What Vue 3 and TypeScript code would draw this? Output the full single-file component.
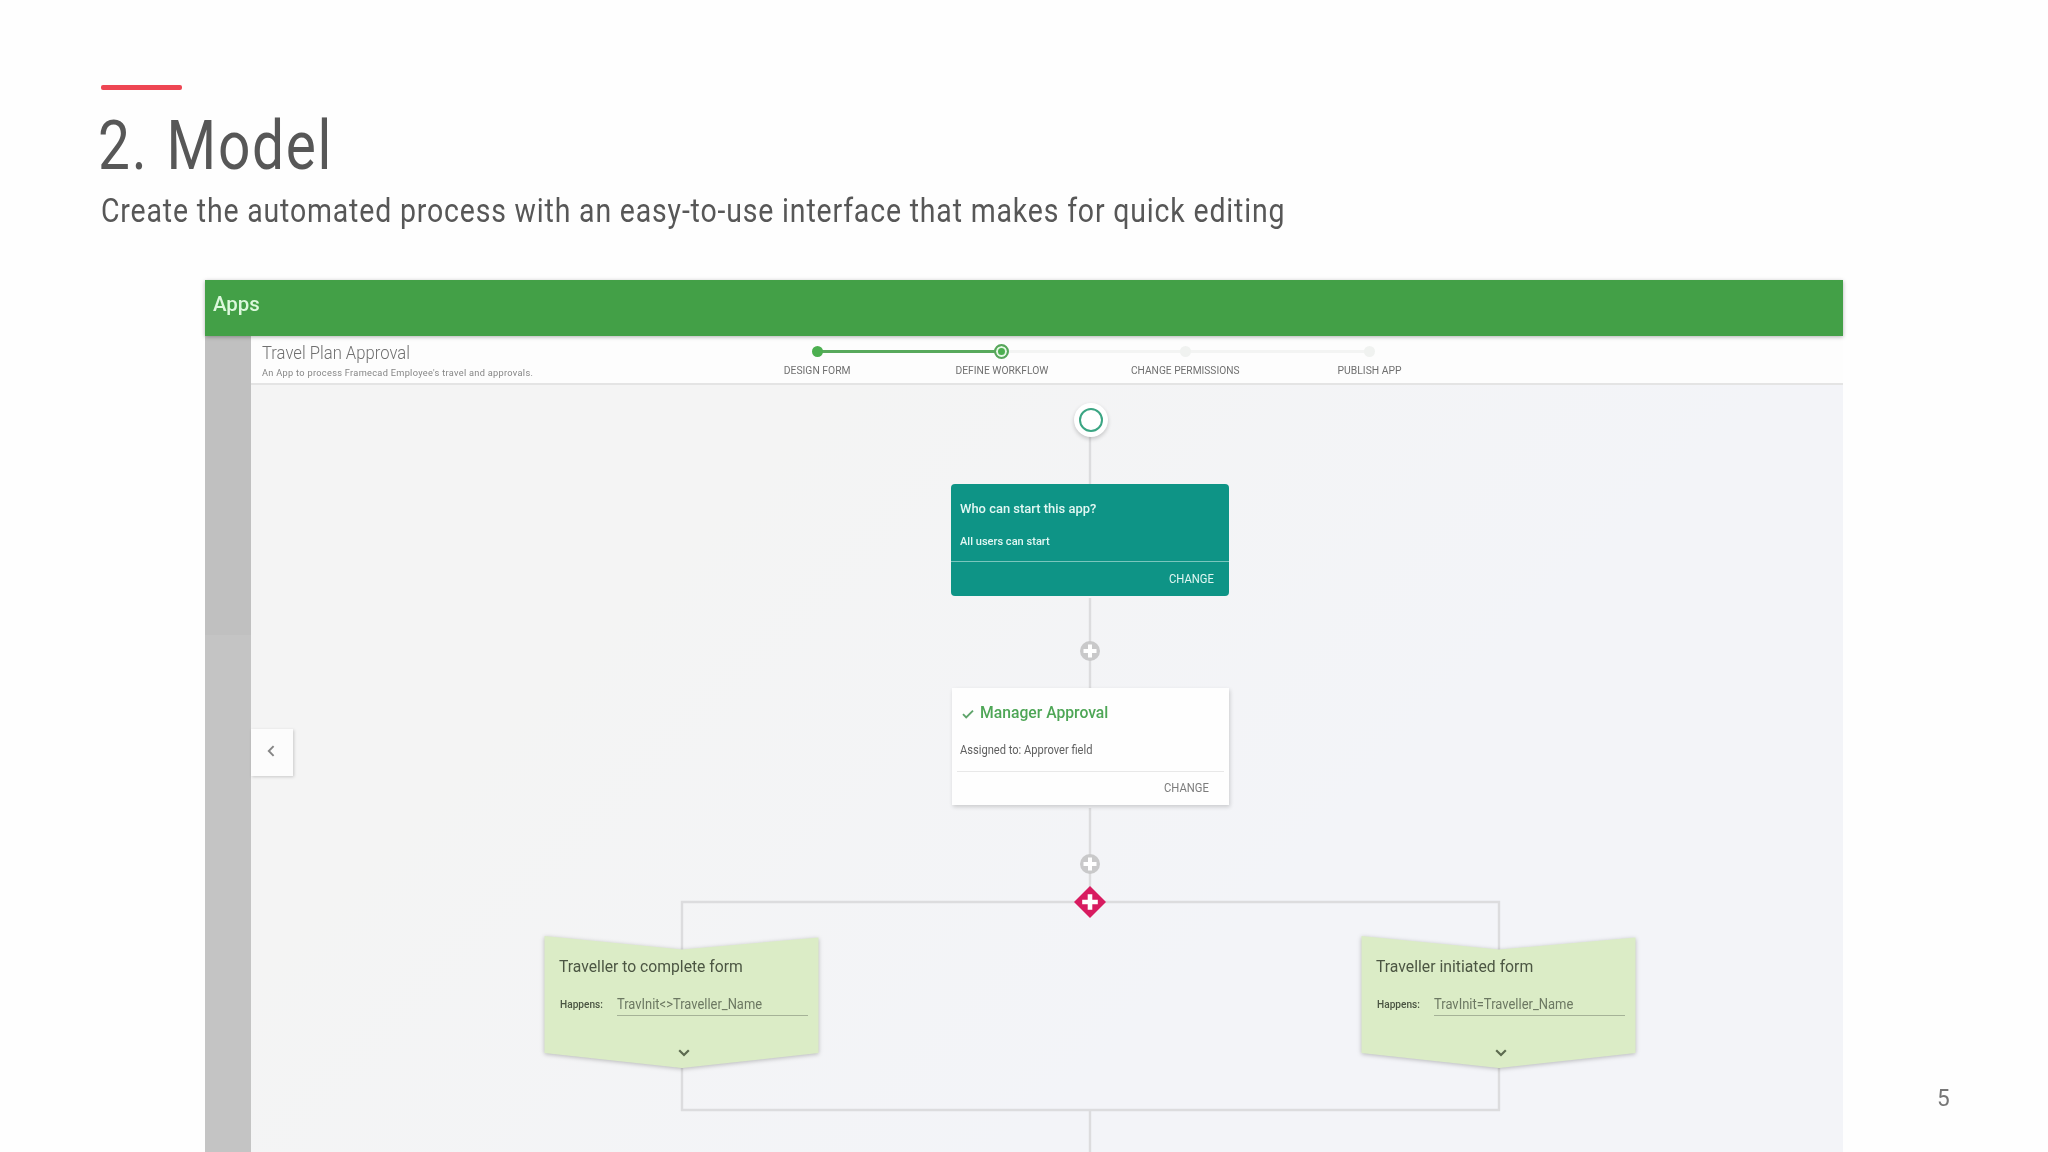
<script setup lang="ts">
import type { Directive } from 'vue'

interface Step {
  label: string
  width: number
  state: 'done' | 'current' | 'todo'
}

interface Branch {
  id: string
  title: string
  titleWidth: number
  condition: string
  conditionWidth: number
}

// Condenses or widens a line of text to a given width in pixels.
const vFit: Directive<HTMLElement, number> = {
  mounted(el, binding) {
    el.style.transform = `scaleX(${binding.value / el.offsetWidth})`
  },
}

const steps: Step[] = [
  { label: 'DESIGN FORM', width: 66.5, state: 'done' },
  { label: 'DEFINE WORKFLOW', width: 93, state: 'current' },
  { label: 'CHANGE PERMISSIONS', width: 109, state: 'todo' },
  { label: 'PUBLISH APP', width: 64, state: 'todo' },
]

const branches: Branch[] = [
  { id: 'left', title: 'Traveller to complete form', titleWidth: 183.5, condition: 'TravInit<>Traveller_Name', conditionWidth: 145 },
  { id: 'right', title: 'Traveller initiated form', titleWidth: 157.5, condition: 'TravInit=Traveller_Name', conditionWidth: 139 },
]
</script>

<template>
  <main class="slide">
    <header class="heading">
      <div class="accent"></div>
      <h1><span v-fit="235" class="fit">2. Model</span></h1>
      <p><span v-fit="1184" class="fit">Create the automated process with an easy-to-use interface that makes for quick editing</span></p>
    </header>

    <section class="app">
      <div class="topbar"><span v-fit="47" class="fit">Apps</span></div>
      <div class="body">
        <aside class="sidebar"><div class="sidebar-top"></div></aside>
        <div class="content">
          <div class="strip">
            <div class="info">
              <div class="app-name"><span v-fit="148" class="fit">Travel Plan Approval</span></div>
              <div class="app-desc"><span v-fit="271" class="fit">An App to process Framecad Employee's travel and approvals.</span></div>
            </div>
            <ol class="steps">
              <li v-for="s in steps" :key="s.label" :class="s.state">
                <div class="track"><i class="dot"></i></div>
                <span v-fit="s.width" class="fit mid">{{ s.label }}</span>
              </li>
            </ol>
          </div>

          <div class="canvas">
            <svg class="wires" width="1592" height="767" viewBox="251 385 1592 767" fill="none" stroke="#dcdcde" stroke-width="2.4">
              <path d="M1090 436V484M1090 598V688M1090 808V902M1090 1110V1152" />
              <path d="M682 950V902H1499V950M682 1068V1110H1499V1068" />
            </svg>

            <div class="start"></div>

            <article class="card teal">
              <div class="card-main">
                <div class="q"><span v-fit="136.5" class="fit">Who can start this app?</span></div>
                <div class="a"><span v-fit="89.5" class="fit">All users can start</span></div>
              </div>
              <footer><span v-fit="45" class="fit end">CHANGE</span></footer>
            </article>

            <svg class="plus first" width="20" height="20" viewBox="0 0 20 20">
              <circle cx="10" cy="10" r="10" fill="#c9c9ca" />
              <path d="M10 3.5v13M3.5 10h13" stroke="#fff" stroke-width="4" />
            </svg>

            <article class="card white">
              <div class="card-main">
                <div class="name">
                  <svg width="12" height="10" viewBox="0 0 12 10"><path d="M1 5.2L4.2 8.4L11 1.6" fill="none" stroke="#5fa46b" stroke-width="1.9" /></svg>
                  <span v-fit="128.5" class="fit">Manager Approval</span>
                </div>
                <div class="who"><span v-fit="132.5" class="fit">Assigned to: Approver field</span></div>
              </div>
              <footer><span v-fit="45" class="fit end">CHANGE</span></footer>
            </article>

            <svg class="plus second" width="20" height="20" viewBox="0 0 20 20">
              <circle cx="10" cy="10" r="10" fill="#c9c9ca" />
              <path d="M10 3.5v13M3.5 10h13" stroke="#fff" stroke-width="4" />
            </svg>

            <svg class="gateway" width="34" height="34" viewBox="0 0 34 34">
              <path d="M17 1L33 17L17 33L1 17Z" fill="#d81b60" />
              <path d="M17 9.2v15.6M9.2 17h15.6" stroke="#fff" stroke-width="4.6" />
            </svg>

            <article v-for="b in branches" :key="b.id" class="branch" :class="b.id">
              <svg class="shape" width="275" height="135" viewBox="0 0 275 135">
                <path d="M0.5 1L138 14.5L274.5 2.5V118L138 133L0.5 118Z" fill="#dbecc6" />
              </svg>
              <div class="branch-body">
                <div class="branch-title"><span v-fit="b.titleWidth" class="fit">{{ b.title }}</span></div>
                <div class="rule">
                  <div class="rule-label"><span v-fit="42.5" class="fit">Happens:</span></div>
                  <div class="rule-value"><span v-fit="b.conditionWidth" class="fit">{{ b.condition }}</span></div>
                </div>
                <svg class="expand" width="12" height="8" viewBox="0 0 12 8"><path d="M1.2 1.2L6 6L10.8 1.2" fill="none" stroke="#5d6b50" stroke-width="2.2" /></svg>
              </div>
            </article>

            <button class="collapse" type="button">
              <svg width="8" height="12" viewBox="0 0 8 12"><path d="M6.6 1.2L1.8 6L6.6 10.8" fill="none" stroke="#858585" stroke-width="1.9" /></svg>
            </button>
          </div>
        </div>
      </div>
    </section>

    <div class="page-number"><span v-fit="12.5" class="fit">5</span></div>
  </main>
</template>

<style>
body {
  margin: 0;
  background: #fff;
}
</style>

<style scoped>
.slide {
  position: relative;
  box-sizing: border-box;
  width: 2048px;
  height: 1152px;
  overflow: hidden;
  background: #fefefe;
  font-family: Roboto, "Liberation Sans", sans-serif;
  color: #555;
}
.fit {
  display: inline-block;
  white-space: nowrap;
  transform-origin: 0 50%;
}
.fit.mid {
  transform-origin: 50% 50%;
}
.fit.end {
  transform-origin: 100% 50%;
}

.heading {
  box-sizing: border-box;
  height: 280px;
  padding: 85px 0 0 100.5px;
}
.accent {
  width: 81px;
  height: 5px;
  border-radius: 2px;
  background: #ee4653;
}
h1 {
  margin: 16px 0 0 -3px;
  font-size: 68px;
  line-height: 80px;
  font-weight: 400;
  letter-spacing: 2px;
  word-spacing: 3px;
  color: #575757;
}
.heading p {
  margin: 4px 0 0;
  font-size: 34px;
  line-height: 40px;
  letter-spacing: 1px;
  color: #575757;
}

.app {
  display: flex;
  flex-direction: column;
  width: 1638px;
  height: 872px;
  margin-left: 205px;
}
.topbar {
  position: relative;
  z-index: 2;
  box-sizing: border-box;
  flex: none;
  height: 55.5px;
  padding: 12px 0 0 8px;
  background: #43a047;
  box-shadow: 0 1px 4px rgba(0, 0, 0, 0.3);
  font-size: 20px;
  line-height: 24px;
  font-weight: 500;
  color: #dcf8dc;
}
.body {
  display: flex;
  flex: 1;
}
.sidebar {
  flex: none;
  width: 46px;
  background: #c4c4c4;
}
.sidebar-top {
  height: 299px;
  background: #c0c0c0;
}
.content {
  display: flex;
  flex-direction: column;
  flex: 1;
}
.strip {
  box-sizing: border-box;
  display: flex;
  height: 49.5px;
  background: #fdfdfd;
  border-bottom: 2px solid #e4e4e4;
}
.info {
  box-sizing: border-box;
  width: 474.5px;
  padding: 7.5px 0 0 11px;
}
.app-name {
  height: 20px;
  font-size: 18px;
  line-height: 20px;
  font-weight: 300;
  color: #707070;
}
.app-desc {
  margin-top: 4px;
  font-size: 9.5px;
  line-height: 12px;
  letter-spacing: 0.3px;
  color: #858585;
}
.steps {
  display: grid;
  grid-template-columns: repeat(4, 184px);
  margin: 0;
  padding: 0;
  list-style: none;
}
.steps li {
  display: flex;
  flex-direction: column;
  align-items: center;
  font-size: 11.5px;
  line-height: 14px;
  color: #707070;
}
.track {
  position: relative;
  display: flex;
  align-items: center;
  justify-content: center;
  width: 184px;
  height: 22px;
  margin: 5px 0 0;
}
li:not(:last-child) .track::before {
  content: "";
  position: absolute;
  left: 92px;
  top: 9.5px;
  width: 184px;
  height: 3px;
  background: #f3f4f3;
}
li.done .track::before {
  background: #58a95c !important;
}
.dot {
  position: relative;
  z-index: 1;
  box-sizing: border-box;
  width: 11px;
  height: 11px;
  border-radius: 50%;
  background: #f0f2f0;
}
.done .dot {
  background: #4caf50;
}
.current .dot {
  width: 15px;
  height: 15px;
  border: 2px solid #57a65b;
  background: #4caf50;
  box-shadow: inset 0 0 0 2px #e6f7e6;
}

.canvas {
  position: relative;
  flex: 1;
  background: linear-gradient(135deg, #f4f4f4 25%, #f3f4f8 65%);
}
.wires {
  position: absolute;
  left: 0;
  top: 0;
}
.start {
  position: absolute;
  left: 822.5px;
  top: 18px;
  box-sizing: border-box;
  width: 34px;
  height: 34px;
  border-radius: 50%;
  background: #fff;
  box-shadow: 0 2px 4px rgba(0, 0, 0, 0.2);
}
.start::after {
  content: "";
  position: absolute;
  inset: 5px;
  border: 2.5px solid #3ba583;
  border-radius: 50%;
}
.card {
  position: absolute;
  display: flex;
  flex-direction: column;
}
.card footer {
  display: flex;
  flex: 1;
  align-items: center;
  justify-content: flex-end;
  font-size: 12px;
}
.teal {
  left: 700px;
  top: 98.5px;
  width: 278px;
  height: 112px;
  border-radius: 4px;
  background: #0e9486;
  color: #e2f7f3;
}
.teal .card-main {
  box-sizing: border-box;
  height: 78.5px;
  padding: 15px 0 0 9px;
  border-bottom: 1px solid #79c6bd;
}
.teal footer {
  padding-right: 15px;
}
.q {
  height: 20px;
  font-size: 13px;
  line-height: 20px;
  font-weight: 500;
}
.a {
  margin-top: 12.5px;
  font-size: 11.5px;
  line-height: 20px;
  font-weight: 500;
}
.white {
  left: 701px;
  top: 303px;
  width: 277px;
  height: 117px;
  background: #fefefe;
  box-shadow: 1px 2px 4px rgba(0, 0, 0, 0.17);
}
.white .card-main {
  box-sizing: border-box;
  height: 84px;
  margin: 0 5px;
  padding: 14px 0 0 3px;
  border-bottom: 1px solid #e8e8e8;
}
.white footer {
  padding: 0 20px 2px 0;
  color: #7c7c7c;
}
.name {
  display: flex;
  align-items: center;
  gap: 6px;
  height: 20px;
  padding: 1px 0 0 1.5px;
  font-size: 16px;
  line-height: 20px;
  font-weight: 500;
  color: #4ea656;
}
.name svg {
  flex: none;
  margin-top: 1px;
}
.who {
  margin-top: 17px;
  font-size: 12px;
  line-height: 20px;
  color: #606060;
}
.plus {
  position: absolute;
  left: 829px;
}
.first {
  top: 256px;
}
.second {
  top: 469px;
}
.gateway {
  position: absolute;
  left: 821.5px;
  top: 500px;
}
.branch {
  position: absolute;
  top: 550px;
  width: 275px;
  height: 135px;
}
.branch.left {
  left: 293px;
}
.branch.right {
  left: 1110px;
}
.shape {
  position: absolute;
  left: 0;
  top: 0;
  overflow: visible;
  filter: drop-shadow(0 1px 2px rgba(0, 0, 0, 0.25));
}
.branch-body {
  position: relative;
  display: flex;
  flex-direction: column;
  padding: 21.5px 11px 0 15px;
}
.branch-title {
  height: 20px;
  font-size: 16px;
  line-height: 20px;
  color: #4c5643;
}
.rule {
  display: flex;
  height: 22px;
  margin-top: 17px;
}
.rule-label {
  box-sizing: border-box;
  width: 58px;
  padding: 1px 0 0 1px;
  font-size: 10px;
  line-height: 20px;
  font-weight: 500;
  color: #4a5442;
}
.rule-value {
  flex: 1;
  border-bottom: 1.5px solid #a5b297;
  font-size: 14px;
  line-height: 20px;
  color: #6c7862;
}
.expand {
  margin: 33.5px 0 0 118.5px;
}
.collapse {
  position: absolute;
  left: 0;
  top: 344px;
  display: flex;
  align-items: center;
  width: 42px;
  height: 47px;
  padding: 0 0 4px 16px;
  border: 0;
  background: #fcfcfc;
  box-shadow: 1px 1px 3px rgba(0, 0, 0, 0.18);
}
.page-number {
  position: absolute;
  left: 1937px;
  top: 1084px;
  font-size: 23.5px;
  line-height: 28px;
  color: #777;
}
</style>
